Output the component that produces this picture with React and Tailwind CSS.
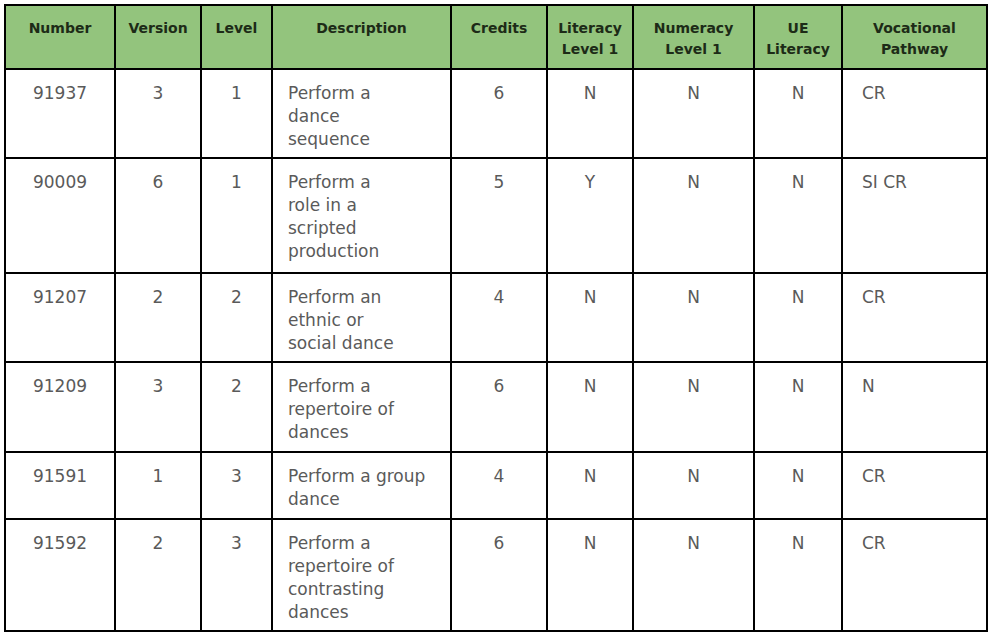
const columns = [
  { key: 'number', label: ['Number'], w: 'w-[110px]' },
  { key: 'version', label: ['Version'], w: 'w-[86px]' },
  { key: 'level', label: ['Level'], w: 'w-[71px]' },
  { key: 'desc', label: ['Description'], w: 'w-[179px]' },
  { key: 'credits', label: ['Credits'], w: 'w-[96px]' },
  { key: 'lit', label: ['Literacy', 'Level 1'], w: 'w-[86px]' },
  { key: 'num', label: ['Numeracy', 'Level 1'], w: 'w-[121px]' },
  { key: 'ue', label: ['UE', 'Literacy'], w: 'w-[88px]' },
  { key: 'voc', label: ['Vocational', 'Pathway'], w: 'w-[145px]' },
]

const rows = [
  { number: '91937', version: '3', level: '1', desc: ['Perform a', 'dance', 'sequence'], credits: '6', lit: 'N', num: 'N', ue: 'N', voc: 'CR', h: 'h-[89px]' },
  { number: '90009', version: '6', level: '1', desc: ['Perform a', 'role in a', 'scripted', 'production'], credits: '5', lit: 'Y', num: 'N', ue: 'N', voc: 'SI CR', h: 'h-[115px]' },
  { number: '91207', version: '2', level: '2', desc: ['Perform an', 'ethnic or', 'social dance'], credits: '4', lit: 'N', num: 'N', ue: 'N', voc: 'CR', h: 'h-[89px]' },
  { number: '91209', version: '3', level: '2', desc: ['Perform a', 'repertoire of', 'dances'], credits: '6', lit: 'N', num: 'N', ue: 'N', voc: 'N', h: 'h-[90px]' },
  { number: '91591', version: '1', level: '3', desc: ['Perform a group', 'dance'], credits: '4', lit: 'N', num: 'N', ue: 'N', voc: 'CR', h: 'h-[67px]' },
  { number: '91592', version: '2', level: '3', desc: ['Perform a', 'repertoire of', 'contrasting', 'dances'], credits: '6', lit: 'N', num: 'N', ue: 'N', voc: 'CR', h: 'h-[112px]' },
]

export default function App() {
  return (
    <div className="min-h-[641px] w-[1000px] bg-white pl-[4px] pt-[4px] font-['DejaVu_Sans',sans-serif]">
      <table className="table-fixed border-collapse border-2 border-black">
        <thead>
          <tr className="h-[64px] bg-[#93c47d]">
            {columns.map((c) => (
              <th
                key={c.key}
                className={`${c.w} border-2 border-black px-1 pt-[12px] align-top text-center text-[14px] font-bold leading-[21px] text-[#1d2b17]`}
              >
                {c.label.map((l) => (
                  <div key={l}>{l}</div>
                ))}
              </th>
            ))}
          </tr>
        </thead>
        <tbody>
          {rows.map((r) => (
            <tr key={r.number} className={r.h}>
              {columns.map((c) => {
                if (c.key === 'desc') {
                  return (
                    <td key={c.key} className="border-2 border-black pl-[15px] pt-[12px] align-top text-left text-[17px] leading-[23px] text-[#5a5a5a]">
                      {r.desc.map((l) => (
                        <div key={l} className="whitespace-nowrap">{l}</div>
                      ))}
                    </td>
                  )
                }
                if (c.key === 'voc') {
                  return (
                    <td key={c.key} className="border-2 border-black pl-[19px] pt-[12px] align-top text-left text-[17px] leading-[23px] text-[#5a5a5a]">
                      {r.voc}
                    </td>
                  )
                }
                return (
                  <td key={c.key} className="border-2 border-black pt-[12px] align-top text-center text-[17px] leading-[23px] text-[#5a5a5a]">
                    {r[c.key]}
                  </td>
                )
              })}
            </tr>
          ))}
        </tbody>
      </table>
    </div>
  )
}
